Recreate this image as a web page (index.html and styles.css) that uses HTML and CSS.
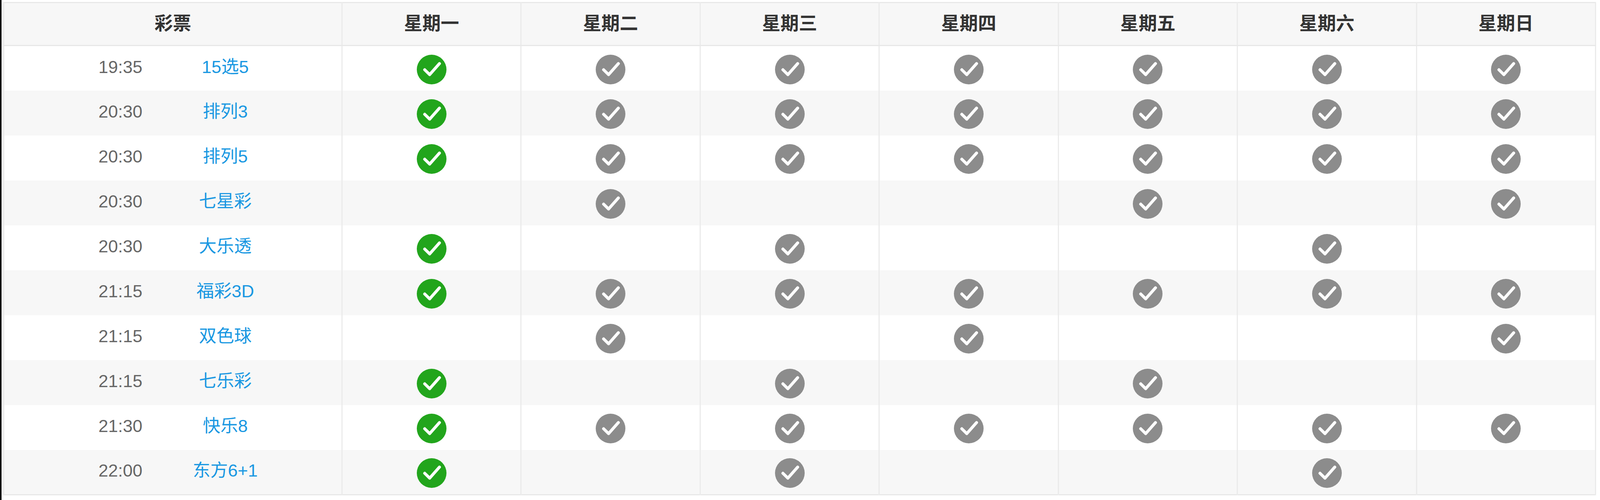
FILE: index.html
```html
<!DOCTYPE html>
<html lang="zh-CN">
<head>
<meta charset="utf-8">
<title>开奖时间表</title>
<link rel="stylesheet" href="styles.css">
</head>
<body>
<svg class="defs" width="0" height="0" aria-hidden="true">
  <defs>
    <symbol id="chk" viewBox="0 0 24 24">
      <circle cx="12" cy="12" r="12"/>
      <path d="M6.4 12.2 L10.4 16.1 L18.3 7.2" fill="none" stroke="#fff" stroke-width="2.4" stroke-linecap="round" stroke-linejoin="round"/>
    </symbol>
  </defs>
</svg>
<div class="wrap">
<table class="sched">
  <colgroup>
    <col class="c-name">
    <col><col><col><col><col><col><col>
  </colgroup>
  <thead>
    <tr><th>彩票</th><th>星期一</th><th>星期二</th><th>星期三</th><th>星期四</th><th>星期五</th><th>星期六</th><th>星期日</th></tr>
  </thead>
  <tbody>
    <tr>
      <td class="lot"><span class="time">19:35</span><a class="name" href="#">15选5</a></td>
      <td><svg class="ic on"><use href="#chk"/></svg></td>
      <td><svg class="ic"><use href="#chk"/></svg></td>
      <td><svg class="ic"><use href="#chk"/></svg></td>
      <td><svg class="ic"><use href="#chk"/></svg></td>
      <td><svg class="ic"><use href="#chk"/></svg></td>
      <td><svg class="ic"><use href="#chk"/></svg></td>
      <td><svg class="ic"><use href="#chk"/></svg></td>
    </tr>
    <tr>
      <td class="lot"><span class="time">20:30</span><a class="name" href="#">排列3</a></td>
      <td><svg class="ic on"><use href="#chk"/></svg></td>
      <td><svg class="ic"><use href="#chk"/></svg></td>
      <td><svg class="ic"><use href="#chk"/></svg></td>
      <td><svg class="ic"><use href="#chk"/></svg></td>
      <td><svg class="ic"><use href="#chk"/></svg></td>
      <td><svg class="ic"><use href="#chk"/></svg></td>
      <td><svg class="ic"><use href="#chk"/></svg></td>
    </tr>
    <tr>
      <td class="lot"><span class="time">20:30</span><a class="name" href="#">排列5</a></td>
      <td><svg class="ic on"><use href="#chk"/></svg></td>
      <td><svg class="ic"><use href="#chk"/></svg></td>
      <td><svg class="ic"><use href="#chk"/></svg></td>
      <td><svg class="ic"><use href="#chk"/></svg></td>
      <td><svg class="ic"><use href="#chk"/></svg></td>
      <td><svg class="ic"><use href="#chk"/></svg></td>
      <td><svg class="ic"><use href="#chk"/></svg></td>
    </tr>
    <tr>
      <td class="lot"><span class="time">20:30</span><a class="name" href="#">七星彩</a></td>
      <td></td>
      <td><svg class="ic"><use href="#chk"/></svg></td>
      <td></td>
      <td></td>
      <td><svg class="ic"><use href="#chk"/></svg></td>
      <td></td>
      <td><svg class="ic"><use href="#chk"/></svg></td>
    </tr>
    <tr>
      <td class="lot"><span class="time">20:30</span><a class="name" href="#">大乐透</a></td>
      <td><svg class="ic on"><use href="#chk"/></svg></td>
      <td></td>
      <td><svg class="ic"><use href="#chk"/></svg></td>
      <td></td>
      <td></td>
      <td><svg class="ic"><use href="#chk"/></svg></td>
      <td></td>
    </tr>
    <tr>
      <td class="lot"><span class="time">21:15</span><a class="name" href="#">福彩3D</a></td>
      <td><svg class="ic on"><use href="#chk"/></svg></td>
      <td><svg class="ic"><use href="#chk"/></svg></td>
      <td><svg class="ic"><use href="#chk"/></svg></td>
      <td><svg class="ic"><use href="#chk"/></svg></td>
      <td><svg class="ic"><use href="#chk"/></svg></td>
      <td><svg class="ic"><use href="#chk"/></svg></td>
      <td><svg class="ic"><use href="#chk"/></svg></td>
    </tr>
    <tr>
      <td class="lot"><span class="time">21:15</span><a class="name" href="#">双色球</a></td>
      <td></td>
      <td><svg class="ic"><use href="#chk"/></svg></td>
      <td></td>
      <td><svg class="ic"><use href="#chk"/></svg></td>
      <td></td>
      <td></td>
      <td><svg class="ic"><use href="#chk"/></svg></td>
    </tr>
    <tr>
      <td class="lot"><span class="time">21:15</span><a class="name" href="#">七乐彩</a></td>
      <td><svg class="ic on"><use href="#chk"/></svg></td>
      <td></td>
      <td><svg class="ic"><use href="#chk"/></svg></td>
      <td></td>
      <td><svg class="ic"><use href="#chk"/></svg></td>
      <td></td>
      <td></td>
    </tr>
    <tr>
      <td class="lot"><span class="time">21:30</span><a class="name" href="#">快乐8</a></td>
      <td><svg class="ic on"><use href="#chk"/></svg></td>
      <td><svg class="ic"><use href="#chk"/></svg></td>
      <td><svg class="ic"><use href="#chk"/></svg></td>
      <td><svg class="ic"><use href="#chk"/></svg></td>
      <td><svg class="ic"><use href="#chk"/></svg></td>
      <td><svg class="ic"><use href="#chk"/></svg></td>
      <td><svg class="ic"><use href="#chk"/></svg></td>
    </tr>
    <tr>
      <td class="lot"><span class="time">22:00</span><a class="name" href="#">东方6+1</a></td>
      <td><svg class="ic on"><use href="#chk"/></svg></td>
      <td></td>
      <td><svg class="ic"><use href="#chk"/></svg></td>
      <td></td>
      <td></td>
      <td><svg class="ic"><use href="#chk"/></svg></td>
      <td></td>
    </tr>
  </tbody>
</table>
</div>
</body>
</html>
```

FILE: styles.css
```css
html, body {
  margin: 0;
  padding: 0;
  background: #fff;
  overflow: hidden;
}
body {
  height: 1280px;
  border-left: 4px solid #111;
  font-family: "Liberation Sans", Arial, "Noto Sans CJK SC", sans-serif;
  font-size: 45px;
  line-height: 1.2;
  color: #666;
}
.defs {
  position: absolute;
  width: 0;
  height: 0;
  overflow: hidden;
}
.wrap {
  padding: 5px 10px 0 4px;
}
.sched {
  width: 100%;
  table-layout: fixed;
  border-collapse: collapse;
  border: 3px solid #e8e8e8;
}
.c-name {
  width: 21.25%;
}
.sched th,
.sched td {
  border-left: 3px solid #ebebeb;
  border-right: 3px solid #ebebeb;
  text-align: center;
  vertical-align: middle;
  padding: 0;
}
.sched thead tr {
  height: 110px;
  background: #f7f7f7;
}
.sched th {
  font-family: "Noto Sans CJK SC", sans-serif;
  font-size: 47px;
  line-height: 1.2;
  font-weight: bold;
  color: #333;
  border-bottom: 3px solid #e8e8e8;
  padding-bottom: 10px;
}
.sched tbody tr {
  height: 115px;
}
.sched tbody tr:nth-child(even) {
  background: #f7f7f7;
}
.lot {
  white-space: nowrap;
}
.time,
.name {
  display: inline-block;
  width: 31.1%;
  text-align: center;
  padding-bottom: 6px;
}
.time {
  color: #666;
}
.name {
  color: #1a98e2;
  text-decoration: none;
}
.ic {
  display: block;
  width: 76px;
  height: 76px;
  margin: 6px auto 0;
  fill: #8c8c8c;
}
.ic.on {
  fill: #22a51c;
}
```
